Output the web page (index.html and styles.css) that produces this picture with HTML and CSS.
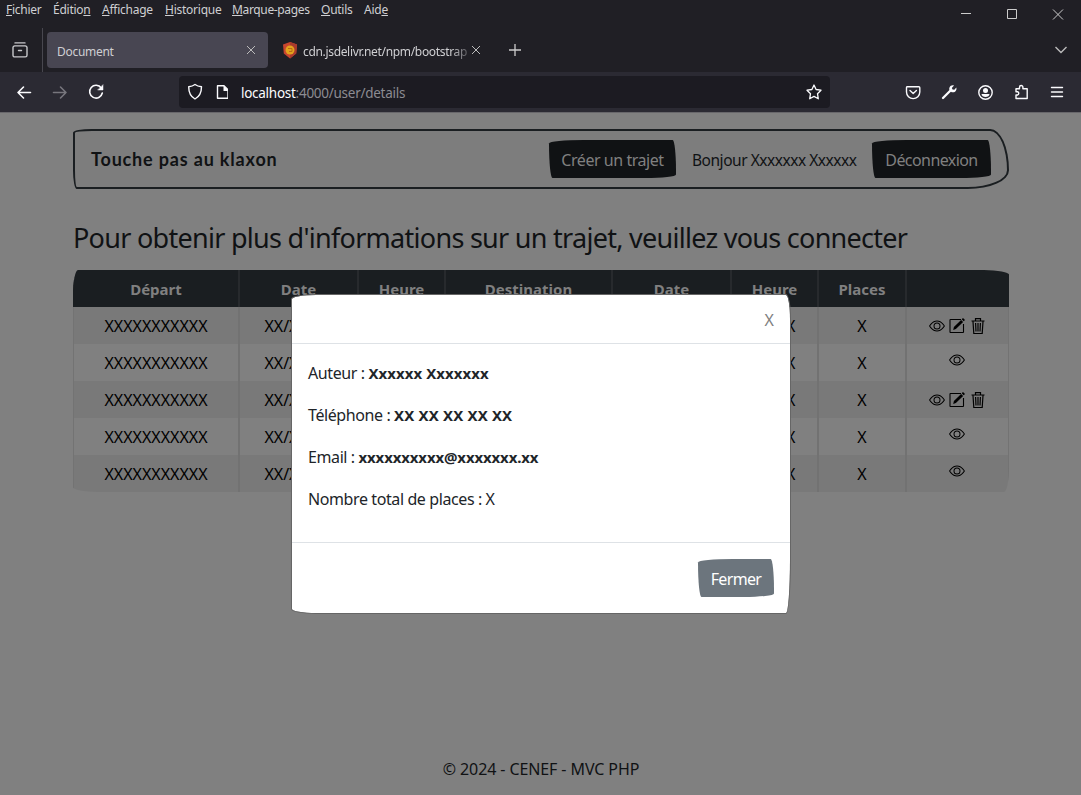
FILE: index.html
```html
<!DOCTYPE html>
<html lang="fr">
<head>
<meta charset="utf-8">
<title>Document</title>
<link rel="stylesheet" href="styles.css">
</head>
<body>
<svg class="defs" width="0" height="0">
  <symbol id="eye" viewBox="0 0 16 16"><path d="M16 8s-3-5.500-8-5.500S0 8 0 8s3 5.500 8 5.500S16 8 16 8M1.173 8a13 13 0 0 1 1.660-2.043C4.120 4.668 5.880 3.500 8 3.500s3.879 1.168 5.168 2.457A13 13 0 0 1 14.828 8c-.335.480-.83 1.120-1.660 2.043C11.879 11.332 10.119 12.500 8 12.500s-3.879-1.168-5.168-2.457A13 13 0 0 1 1.172 8"/><path d="M8 5.500a2.500 2.500 0 1 0 0 5 2.500 2.500 0 0 0 0-5M4.500 8a3.500 3.500 0 1 1 7 0 3.500 3.500 0 0 1-7 0"/></symbol>
  <symbol id="edit" viewBox="0 0 16 16"><path d="M12 1.500H1.500a.5.500 0 0 0-.5.500v12a.5.500 0 0 0 .5.500h12.500a.5.500 0 0 0 .5-.5V6" fill="none" stroke="currentColor" stroke-width="1.100"/><path d="M14 0l2 2-1.300 1.300-2-2zM12.100 1.900l2 2-7.200 7.200-2.700.8.700-2.800z"/></symbol>
  <symbol id="trash" viewBox="0 0 16 16"><path d="M5.500 2.500V.6h5v1.900M1.500 3h13M3 3.500l.8 12h8.400l.8-12M5.600 5l.4 8.500M8 5v8.500M10.400 5l-.4 8.500" fill="none" stroke="currentColor" stroke-width="1.200"/></symbol>
</svg>
<div class="window">
  <div class="top">
    <div class="menus"><span class="m1"><u>F</u>ichier</span><span class="m2">Éditio<u>n</u></span><span class="m3"><u>A</u>ffichage</span><span class="m4"><u>H</u>istorique</span><span class="m5"><u>M</u>arque-pages</span><span class="m6"><u>O</u>utils</span><span class="m7">Aid<u>e</u></span></div>
    <svg class="winctl" width="110" height="28" fill="none" stroke="#ccc"><path d="M0 13.500h10M46.500 9.500h9v9h-9zM92 9.500l10 10M102 9.500l-10 10"/></svg>
  </div>
  <div class="tabs">
    <div class="archive"><svg width="16" height="16" viewBox="0 0 16 16" fill="none" stroke="#c8c8cc" stroke-width="1.400" stroke-linecap="round"><path d="M3 .9h10M2.700 3.900h10.600a1.700 1.700 0 0 1 1.700 1.700v7.600a1.700 1.700 0 0 1-1.700 1.700H2.700A1.700 1.700 0 0 1 1 13.200V5.600a1.700 1.700 0 0 1 1.700-1.700zM6.500 8.500h3"/></svg></div>
    <div class="tab active"><span class="t1">Document</span><svg class="x" width="10" height="10" stroke="#bbb"><path d="M1 1l8 8M9 1l-8 8"/></svg></div>
    <div class="tab"><svg class="fav" width="16" height="17" viewBox="0 0 16 17"><path d="M8 0l7 2.500-.8 9L8 16.500l-6.200-5L1 2.500z" fill="#c8452f"/><path d="M8 0l7 2.500-.8 9L8 16.500z" fill="#a93a2c"/><circle cx="8" cy="8" r="4.500" fill="#e3a21c"/><path d="M6 6.500h4v3H7" fill="none" stroke="#b96a14"/></svg><span class="t2">cdn.jsdelivr.net/npm/bootstrap</span><svg class="x2" width="10" height="10" stroke="#bbb"><path d="M1 1l8 8M9 1l-8 8"/></svg></div>
    <svg class="plus" width="12" height="12" stroke="#ccc" stroke-width="1.300"><path d="M6 0v12M0 6h12"/></svg>
    <svg class="chev" width="12" height="8" fill="none" stroke="#bbb" stroke-width="1.400"><path d="M.5 1L6 6.500 11.500 1"/></svg>
  </div>
  <div class="bar">
    <svg class="nav" width="180" height="40" fill="none" stroke="#fbfbfe" stroke-width="1.600" stroke-linecap="round" stroke-linejoin="round"><path d="M30.500 20.500H18M23.500 15L18 20.500l5.500 5.500"/><path stroke="#77767d" d="M53.500 20.500H66M60.500 15l5.500 5.500-5.500 5.500"/><path d="M101.300 16A6.400 6.400 0 1 0 102.300 21"/><path d="M103 13v5h-5z" fill="#fbfbfe" stroke-width=".5"/></svg>
    <div class="url">
      <svg width="40" height="18" fill="none" stroke="#fbfbfe" stroke-width="1.400" stroke-linejoin="round"><path d="M7 1.500c2 1.500 4 2 6.500 2.200 0 5.500-1.500 9.500-6.500 12.300C2 13.200.7 9.200.7 3.700 3 3.500 5 3 7 1.500z"/><path d="M30 2.700h6.500l4 4V15.200H30z" transform="translate(-.5)"/><path d="M35.500 2v6h5z" fill="#fbfbfe" stroke="none"/></svg>
      <span class="addr"><b>localhost</b>:4000/user/details</span>
      <svg class="star" width="16" height="16" viewBox="0 0 16 16" fill="none" stroke="#fbfbfe" stroke-width="1.300" stroke-linejoin="round"><path d="M8 1l2.100 4.500 4.900.7-3.500 3.500.8 5.100L8 12.400l-4.300 2.400.8-5.100L1 6.200l4.900-.7z"/></svg>
    </div>
    <svg class="tools" width="176" height="40" fill="none" stroke="#fbfbfe" stroke-width="1.400" stroke-linecap="round" stroke-linejoin="round"><path d="M2.200 14.700h11.600a1 1 0 0 1 1 1v4.300a6.500 6.500 0 0 1-13.300 0v-4.300a1 1 0 0 1 .7-1zM5 18.500l3.200 3 3.200-3"/><path d="M38 26l7-7" stroke-width="2.300"/><path d="M49 13.500l-2.200 2.500.8 1.500 1.700.3 2-2.300c.8 2.500-1 5-3.500 4.800-2.500 0-4.300-2.500-3.300-4.800.8-1.700 2.500-2.600 4.500-2z" fill="#fbfbfe" stroke="none"/><circle cx="80.500" cy="20.500" r="6.700"/><g fill="#fbfbfe" stroke="none"><circle cx="80.500" cy="18.500" r="2.500"/><path d="M76.500 22h8c0 4-8 4-8 0z"/></g><path d="M111 17.200h3.500v-1.500a1.700 1.700 0 0 1 3.400 0v1.500h4.300v9.800H111v-3.500h1.500a1.700 1.700 0 0 0 0-3.300H111z" transform="translate(0 -.5)"/><path d="M147 15.500h11M147 20h11M147 24.500h11" transform="translate(-.5)"/></svg>
  </div>
  <div class="page">
    <header class="header">
      <span class="brand">Touche pas au klaxon</span>
      <span class="btn dark b1"><span class="c1">Créer un trajet</span></span>
      <span class="hello">Bonjour Xxxxxxx Xxxxxx</span>
      <span class="btn dark b2"><span class="c2">Déconnexion</span></span>
    </header>
    <h1><span class="title">Pour obtenir plus d'informations sur un trajet, veuillez vous connecter</span></h1>
    <div class="table">
      <div class="row head"><span>Départ</span><span>Date</span><span>Heure</span><span>Destination</span><span>Date</span><span>Heure</span><span>Places</span><span></span></div>
      <div class="row odd"><span>XXXXXXXXXXX</span><span>XX/XX/XX</span><span>XX:XX</span><span></span><span></span><span>XX:XX</span><span>X</span><span class="ic"><svg><use href="#eye"/></svg><svg><use href="#edit"/></svg><svg><use href="#trash"/></svg></span></div>
      <div class="row"><span>XXXXXXXXXXX</span><span>XX/XX/XX</span><span></span><span></span><span></span><span>XX:XX</span><span>X</span><span class="ic one"><svg><use href="#eye"/></svg></span></div>
      <div class="row odd"><span>XXXXXXXXXXX</span><span>XX/XX/XX</span><span></span><span></span><span></span><span>XX:XX</span><span>X</span><span class="ic"><svg><use href="#eye"/></svg><svg><use href="#edit"/></svg><svg><use href="#trash"/></svg></span></div>
      <div class="row"><span>XXXXXXXXXXX</span><span>XX/XX/XX</span><span></span><span></span><span></span><span>XX:XX</span><span>X</span><span class="ic one"><svg><use href="#eye"/></svg></span></div>
      <div class="row odd"><span>XXXXXXXXXXX</span><span>XX/XX/XX</span><span></span><span></span><span></span><span>XX:XX</span><span>X</span><span class="ic one"><svg><use href="#eye"/></svg></span></div>
    </div>
    <footer><span class="foot">© 2024 - CENEF - MVC PHP</span></footer>
  </div>
</div>
<div class="modal">
  <div class="mhead"><span>X</span></div>
  <div class="mbody">
    <p><span>Auteur : </span><b class="v1">Xxxxxx Xxxxxxx</b></p>
    <p><span>Téléphone : </span><b class="v2">XX XX XX XX XX</b></p>
    <p><span>Email : </span><b class="v3">xxxxxxxxxx@xxxxxxx.xx</b></p>
    <p><span>Nombre total de places : X</span></p>
  </div>
  <div class="mfoot"><span class="btn grey"><span class="c3">Fermer</span></span></div>
</div>
</body>
</html>
```
FILE: styles.css
```css
* { box-sizing: border-box; }
body { margin: 0; width: 1081px; height: 795px; overflow: hidden; position: relative; font-family: "Noto Sans", "Open Sans", sans-serif; font-size: 16px; color: #101214; }
svg { flex: none; display: block; }
.defs { position: absolute; }
.window { display: flex; flex-direction: column; height: 795px; }
.top { height: 28px; background: #201f25; display: flex; justify-content: space-between; color: #cfcfd2; font-size: 12px; }
.menus { display: flex; gap: 12px; padding-left: 6px; line-height: 20px; white-space: nowrap; letter-spacing: -.25px; }
.menus u { text-underline-offset: 1px; }
.winctl { margin-right: 10px; }
.menus span { flex: none; }
.m1 { width: 35px; } .m2 { width: 37px; } .m3 { width: 51px; } .m4 { width: 55px; } .m5 { width: 77px; letter-spacing: -.35px; } .m6 { width: 31px; } .m7 { width: 25px; }
.tabs { height: 44px; background: #201f25; display: flex; align-items: center; color: #cfcfd2; font-size: 12px; }
.archive { width: 43px; height: 44px; border-right: 1px solid #48474f; padding: 14px 0 0 12px; }
.tab { width: 221px; height: 36px; margin-left: 4px; padding: 0 12px 0 10px; display: flex; align-items: center; border-radius: 4px; white-space: nowrap; }
.tab.active { background: #484652; justify-content: space-between; }
.t1, .t2 { padding-top: 2px; }
.t1 { letter-spacing: -.3px; }
.fav { margin-right: 5px; }
.t2 { width: 166px; letter-spacing: -.33px; overflow: hidden; -webkit-mask-image: linear-gradient(90deg, #000 148px, transparent 172px); }
.x2 { margin-left: 2px; }
.plus { margin-left: 16px; }
.chev { margin-left: auto; margin-right: 14px; }
.bar { height: 40px; background: #2b2a33; display: flex; }
.nav { width: 179px; }
.url { width: 651px; height: 32px; margin-top: 4px; background: #1c1b22; border-radius: 4px; display: flex; align-items: center; padding: 0 8px 0 9px; }
.addr { margin-left: 13px; font-size: 13.5px; letter-spacing: -.27px; padding-top: 2px; color: #8c8b92; white-space: nowrap; }
.addr b { font-weight: 400; color: #fbfbfe; }
.star { margin-left: auto; }
.tools { margin-left: 75px; }
.page { flex: 1; background: #808080; border-top: 1px solid #68676b; padding: 16px 72px 0 73px; display: flex; flex-direction: column; }
.header { height: 60px; border: 2px solid #1a1e21; border-radius: 25px 25px 55px 5px / 5px 55px 25px 25px; background: #7d7d7d; display: flex; align-items: center; padding: 0 16px; white-space: nowrap; }
.brand { font-family: Lato, sans-serif; font-weight: 700; font-size: 18px; letter-spacing: .83px; margin-right: auto; padding-bottom: 1px; }
.btn { height: 38px; display: flex; align-items: center; justify-content: center; border-radius: 255px 25px 225px 25px / 25px 225px 25px 255px; white-space: nowrap; padding-top: 2px; }
.dark { background: #101214; color: #808080; }
.c1 { letter-spacing: -.45px; }
.c2 { letter-spacing: -.58px; }
.c3 { letter-spacing: -.65px; }
.b1 { width: 127px; margin-right: 16px; }
.hello { width: 165px; margin-right: 15px; padding-top: 2px; font-size: 15.5px; letter-spacing: -.47px; }
.b2 { width: 119px; }
h1 { font-weight: 400; font-size: 27px; letter-spacing: -.72px; line-height: 34px; margin: 32px 0 15px; white-space: nowrap; }
.table { width: 936px; height: 222px; border-radius: 5px 25px 5px 25px / 25px 5px 25px 5px; overflow: hidden; }
.row { display: grid; grid-template-columns: 166px 119px 87px 167px 119px 87px 88px 101px; height: 37px; border: solid #737373; border-width: 0 1px; }
.row > span { display: flex; align-items: center; justify-content: center; border-right: 2px solid #727272; padding-top: 1px; color: #000; white-space: nowrap; }
.row > span:last-child { border-right: 0; }
.odd { background: #797979; }
.row.head { background: #1a1e21; border-color: #1a1e21; font-size: 15px; }
.row.head > span { color: #808080; font-weight: 700; border-color: #272a2d; }
.row > .ic { gap: 4.500px; padding: 1px 1px 0 0; }
.ic svg { width: 16px; height: 16px; fill: #000; color: #000; }
.row > .one { padding-bottom: 6px; padding-top: 0; }
footer { margin-top: auto; height: 37px; text-align: center; letter-spacing: -.1px; }
.modal { position: absolute; left: 291px; top: 294px; width: 500px; height: 320px; background: #fff; border: 1px solid #666; background-clip: padding-box; border-radius: 25px 5px 5px 25px / 5px 25px 55px 5px; color: #212529; display: flex; flex-direction: column; }
.mhead { height: 49px; border-bottom: 1px solid #dee2e6; display: flex; justify-content: flex-end; align-items: center; padding: 2px 16px 0; color: #808080; }
.mbody { flex: 1; padding: 17px 16px 0; letter-spacing: -.4px; }
.mbody p { margin: 0 0 18px; height: 24px; line-height: 24px; white-space: pre; }
.mbody b { font-size: 15px; }
.v1 { letter-spacing: .07px; }
.v2 { letter-spacing: .15px; }
.v3 { letter-spacing: -.12px; }
.mfoot { height: 71px; border-top: 1px solid #dee2e6; display: flex; justify-content: flex-end; padding: 16px; }
.grey { width: 76px; background: #6c757d; color: #fff; }
```
